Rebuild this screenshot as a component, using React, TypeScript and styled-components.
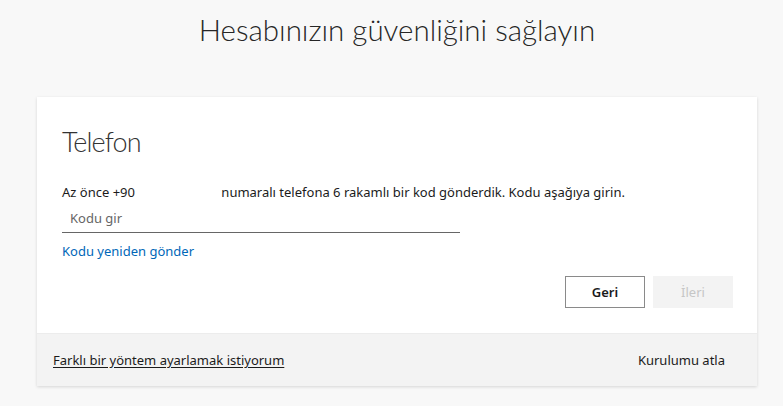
import React from 'react';
import styled, {createGlobalStyle} from 'styled-components';

const GlobalStyle = createGlobalStyle`
    html, body {
        margin: 0;
        padding: 0;
        background: #f8f8f8;
        font-family: 'Noto Sans', 'Open Sans', sans-serif;
        color: #1b1b1b;
    }
`;

const Page = styled.div`
    width: 783px;
    height: 406px;
    overflow: hidden;
`;

const Title = styled.h1`
    margin: 0;
    padding: 12px 0 0 11px;
    height: 97px;
    box-sizing: border-box;
    text-align: center;
    font-family: Lato, 'Open Sans', sans-serif;
    font-weight: 300;
    font-size: 29.5px;
    line-height: 36px;
    color: #262626;
`;

const Card = styled.section`
    margin-left: 37px;
    width: 720px;
    background: #fff;
    box-shadow: 0 1px 3px rgba(0, 0, 0, 0.14);
`;

const CardBody = styled.div`
    padding: 27px 24px 25px 25px;
`;

const Heading = styled.h2`
    margin: 0;
    font-family: Lato, 'Open Sans', sans-serif;
    font-weight: 300;
    font-size: 27px;
    letter-spacing: -0.9px;
    line-height: 36px;
    color: #333;
`;

const Description = styled.p`
    margin: 22px 0 0;
    font-size: 13px;
    line-height: 20px;
    color: #1b1b1b;
`;

const MaskedNumber = styled.span`
    display: inline-block;
    width: 83px;
`;

const CodeInput = styled.input`
    display: block;
    box-sizing: border-box;
    width: 398px;
    height: 30px;
    margin-top: 1px;
    padding: 0 8px;
    border: none;
    border-bottom: 1px solid #666;
    outline: none;
    font-family: 'Noto Sans', sans-serif;
    font-size: 13px;
    color: #1b1b1b;
    background: transparent;

    &::placeholder {
        color: #666;
    }
`;

const ResendLink = styled.a`
    display: inline-block;
    margin-top: 8px;
    font-size: 13px;
    line-height: 20px;
    color: #0067b8;
    text-decoration: none;
`;

const Actions = styled.div`
    display: flex;
    justify-content: flex-end;
    gap: 8px;
    margin-top: 15px;
`;

const ActionButton = styled.button<{$primary?: boolean}>`
    width: 80px;
    height: 32px;
    box-sizing: border-box;
    font-family: 'Noto Sans', sans-serif;
    font-size: 13px;
    border: 1px solid ${({$primary}) => ($primary ? '#f3f3f3' : '#8a8a8a')};
    background: ${({$primary}) => ($primary ? '#f3f3f3' : '#fff')};
    color: ${({$primary}) => ($primary ? '#c6c6c6' : '#1b1b1b')};
    font-weight: ${({$primary}) => ($primary ? 400 : 600)};
    cursor: ${({$primary}) => ($primary ? 'default' : 'pointer')};
`;

const Footer = styled.div`
    display: flex;
    align-items: center;
    justify-content: space-between;
    height: 53px;
    padding: 0 32px 0 16px;
    background: #f3f3f3;
    border-top: 1px solid #ececec;
    box-sizing: border-box;
    font-size: 13px;
    color: #1b1b1b;
`;

const FooterLink = styled.a<{$underline?: boolean}>`
    color: #1b1b1b;
    text-decoration: ${({$underline}) => ($underline ? 'underline' : 'none')};
    text-underline-offset: 2px;
`;

export default function App() {
    return (
        <Page>
            <GlobalStyle />
            <Title>Hesabınızın güvenliğini sağlayın</Title>
            <Card>
                <CardBody>
                    <Heading>Telefon</Heading>
                    <Description>
                        Az önce +90 <MaskedNumber />
                        numaralı telefona 6 rakamlı bir kod gönderdik. Kodu aşağıya girin.
                    </Description>
                    <CodeInput placeholder="Kodu gir" />
                    <ResendLink href="#">Kodu yeniden gönder</ResendLink>
                    <Actions>
                        <ActionButton>Geri</ActionButton>
                        <ActionButton $primary disabled>
                            İleri
                        </ActionButton>
                    </Actions>
                </CardBody>
                <Footer>
                    <FooterLink href="#" $underline>
                        Farklı bir yöntem ayarlamak istiyorum
                    </FooterLink>
                    <FooterLink href="#">Kurulumu atla</FooterLink>
                </Footer>
            </Card>
        </Page>
    );
}
